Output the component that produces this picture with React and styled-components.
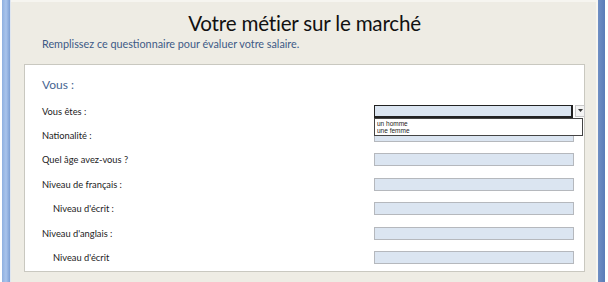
import React from "react";
import styled, { createGlobalStyle } from "styled-components";

const Global = createGlobalStyle`
  html, body { margin: 0; padding: 0; background: #ffffff; }
  body { font-family: Lato, "Open Sans", sans-serif; }
  *, *::before, *::after { box-sizing: border-box; }
`;

const Frame = styled.div`
  width: 608px;
  height: 282px;
  display: flex;
  overflow: hidden;
  background: #ffffff;
`;

const Stripe = styled.div`
  width: ${(p) => p.$w}px;
  margin-left: ${(p) => p.$ml || 0}px;
  flex: none;
  background: ${(p) => p.$bg};
`;

const Main = styled.div`
  flex: 1;
  height: 282px;
  background: #eeece4;
  display: flex;
  flex-direction: column;
  padding: 0 11px 0 13px;
  border-top: 2px solid #f6f5f0;
`;

const Title = styled.h1`
  margin: 9px 0 0;
  text-align: center;
  font-weight: 400;
  font-size: 20.6px;
  line-height: 24px;
  color: #111;
  letter-spacing: -0.2px;
`;

const Subtitle = styled.p`
  margin: 2px 0 0 18px;
  font-size: 10.8px;
  line-height: 14px;
  color: #3d5a86;
`;

const Panel = styled.section`
  margin-top: 13px;
  flex: none;
  height: 208px;
  background: #ffffff;
  border: 1px solid #c9c8c0;
  padding: 12px 0 0 17px;
  position: relative;
`;

const Heading = styled.h2`
  margin: 0 0 6px;
  font-weight: 400;
  font-size: 12px;
  line-height: 16px;
  color: #476591;
`;

const Rows = styled.div`
  display: grid;
  grid-template-columns: 332px 200px;
  grid-auto-rows: 24.4px;
  align-items: center;
`;

const Label = styled.span`
  font-size: 9.3px;
  color: #222;
  padding-left: ${(p) => (p.$indent ? 11 : 0)}px;
`;

const Field = styled.div`
  height: 13px;
  background: #dbe5f1;
  border: 1px solid #b5b8bd;
`;

const SelectWrap = styled.div`
  position: relative;
  height: 13px;
`;

const SelectBox = styled.div`
  height: 13px;
  width: 199px;
  background: #dbe5f1;
  border: 1px solid #222;
  border-width: 1px 2px 2px 1px;
`;

const Arrow = styled.div`
  position: absolute;
  left: 201px;
  top: 0;
  width: 10px;
  height: 12px;
  background: #f4f4f4;
  border: 1px solid #c8c8c8;
  display: flex;
  align-items: center;
  justify-content: center;
`;

const List = styled.ul`
  position: absolute;
  left: 0;
  top: 13px;
  width: 209px;
  margin: 0;
  padding: 1px 0 1px 2px;
  list-style: none;
  background: #ffffff;
  border: 1px solid #444;
  z-index: 2;
`;

const Option = styled.li`
  font-family: Arial, "Liberation Sans", sans-serif;
  font-size: 6.5px;
  line-height: 7px;
  color: #222;
`;

const rows = [
  { label: "Nationalité :" },
  { label: "Quel âge avez-vous ?" },
  { label: "Niveau de français :" },
  { label: "Niveau d'écrit :", indent: true },
  { label: "Niveau d'anglais :" },
  { label: "Niveau d'écrit", indent: true },
];

export default function App() {
  return (
    <>
      <Global />
      <Frame>
        <Stripe $w={8} $ml={2} $bg="linear-gradient(90deg,#8fb0e0,#a9c4ec 50%,#7d9fd4)" />
        <Stripe $w={1} $bg="#dfe6f0" />
        <Main>
          <Title>Votre métier sur le marché</Title>
          <Subtitle>Remplissez ce questionnaire pour évaluer votre salaire.</Subtitle>
          <Panel>
            <Heading>Vous :</Heading>
            <Rows>
              <Label>Vous êtes :</Label>
              <SelectWrap>
                <SelectBox />
                <Arrow>
                  <svg width="5" height="3" viewBox="0 0 5 3">
                    <path d="M0 0h5L2.5 3z" fill="#333" />
                  </svg>
                </Arrow>
                <List>
                  <Option>un homme</Option>
                  <Option>une femme</Option>
                </List>
              </SelectWrap>
              {rows.map((r, i) => (
                <React.Fragment key={i}>
                  <Label $indent={r.indent}>{r.label}</Label>
                  <Field />
                </React.Fragment>
              ))}
            </Rows>
          </Panel>
        </Main>
        <Stripe $w={2} $bg="#f7f6f1" />
        <Stripe $w={7} $bg="linear-gradient(90deg,#6f8fc4,#5a7cb8)" />
        <Stripe $w={3} $bg="#ffffff" />
      </Frame>
    </>
  );
}
